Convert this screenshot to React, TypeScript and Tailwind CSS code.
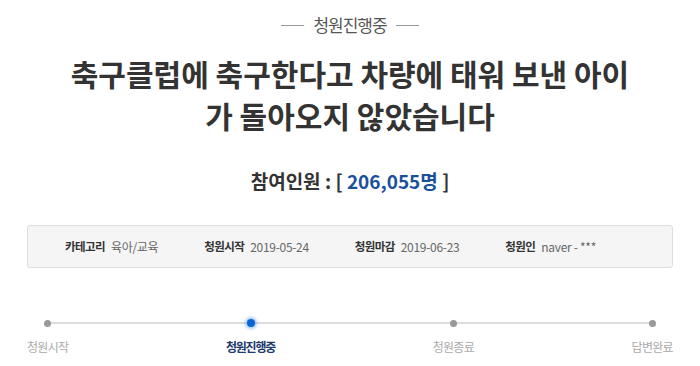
import React from "react";

const font = { fontFamily: '"Noto Sans CJK KR", "Noto Sans", sans-serif' };

function InfoItem({ label, value }: { label: string; value: string }) {
  return (
    <div className="flex items-center gap-[6px]">
      <span className="text-[11.5px] font-bold tracking-[-0.6px] text-[#333]">{label}</span>
      <span className="text-[12px] tracking-[-0.3px] text-[#666]">{value}</span>
    </div>
  );
}

function Step({ label, active }: { label: string; active?: boolean }) {
  return (
    <div className="flex flex-col items-center">
      <div className="flex h-[12px] items-center justify-center">
        {active ? (
          <span className="relative z-10 h-[8px] w-[8px] rounded-full bg-[#0a66d6] shadow-[0_0_3px_2px_rgba(60,140,240,0.45)]" />
        ) : (
          <span className="relative z-10 h-[7px] w-[7px] rounded-full bg-[#999]" />
        )}
      </div>
      <span
        className={
          active
            ? "mt-[9px] text-[12px] font-bold tracking-[-1.2px] text-[#1c3a6e]"
            : "mt-[9px] text-[12px] tracking-[-0.7px] text-[#aaa]"
        }
      >
        {label}
      </span>
    </div>
  );
}

export default function App() {
  return (
    <div className="h-[366px] w-[700px] overflow-hidden bg-white" style={font}>
      <div className="flex flex-col items-center pt-[14px]">
        <div className="flex items-center gap-[9px]">
          <span className="h-px w-[23px] bg-[#999]" />
          <span className="text-[17px] leading-[22px] tracking-[-1px] text-[#555]">청원진행중</span>
          <span className="h-px w-[23px] bg-[#999]" />
        </div>
        <h1 className="mt-[16px] text-center text-[30px] font-bold leading-[42px] text-[#333]">
          축구클럽에 축구한다고 차량에 태워 보낸 아이
          <br />가 돌아오지 않았습니다
        </h1>
        <div className="mt-[32px] text-[19px] font-bold leading-[26px] text-[#333]">
          참여인원 : [ <span className="text-[#1a4f9c]">206,055명</span> ]
        </div>
      </div>
      <div className="mx-[27px] mt-[31px] flex h-[43px] items-center gap-[46px] rounded-[3px] border border-[#ddd] bg-[#f5f5f5] pl-[37px]">
        <InfoItem label="카테고리" value="육아/교육" />
        <InfoItem label="청원시작" value="2019-05-24" />
        <InfoItem label="청원마감" value="2019-06-23" />
        <InfoItem label="청원인" value="naver - ***" />
      </div>
      <div className="relative mt-[49px] flex justify-between px-[27px]">
        <div className="absolute left-[47px] right-[48px] top-[5px] h-[2px] bg-[#ddd]" />
        <Step label="청원시작" />
        <Step label="청원진행중" active />
        <Step label="청원종료" />
        <Step label="답변완료" />
      </div>
    </div>
  );
}
